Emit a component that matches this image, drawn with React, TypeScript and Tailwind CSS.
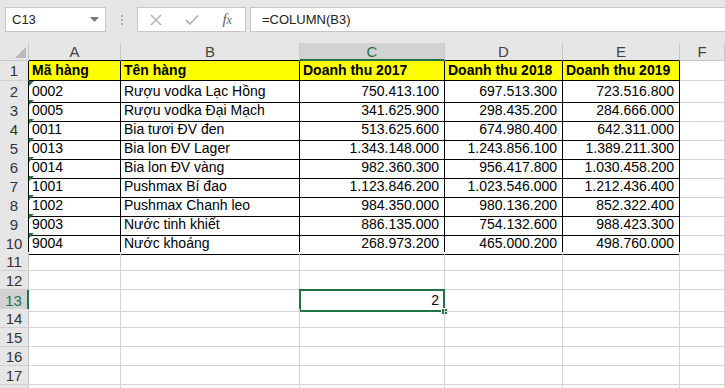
import React from "react";

const cols = ["A", "B", "C", "D", "E", "F"];

const rows: [string, string, string, string, string][] = [
  ["0002", "Rượu vodka Lạc Hồng", "750.413.100", "697.513.300", "723.516.800"],
  ["0005", "Rượu vodka Đại Mạch", "341.625.900", "298.435.200", "284.666.000"],
  ["0011", "Bia tươi ĐV đen", "513.625.600", "674.980.400", "642.311.000"],
  ["0013", "Bia lon ĐV Lager", "1.343.148.000", "1.243.856.100", "1.389.211.300"],
  ["0014", "Bia lon ĐV vàng", "982.360.300", "956.417.800", "1.030.458.200"],
  ["1001", "Pushmax Bí đao", "1.123.846.200", "1.023.546.000", "1.212.436.400"],
  ["1002", "Pushmax Chanh leo", "984.350.000", "980.136.200", "852.322.400"],
  ["9003", "Nước tinh khiết", "886.135.000", "754.132.600", "988.423.300"],
  ["9004", "Nước khoáng", "268.973.200", "465.000.200", "498.760.000"],
];

const gridCols = "grid grid-cols-[29px_92px_179px_145px_118px_117px_1fr]";

function TopBar() {
  return (
    <div className="h-[43px] bg-[#e6e6e6] flex items-start pt-[7px] pl-[5px]">
      <div className="w-[101px] h-[25px] bg-white border border-[#c6c6c6] flex items-center justify-between pl-[6px] pr-[6px]">
        <span className="text-[13px] text-[#222]">C13</span>
        <svg width="9" height="5" viewBox="0 0 9 5">
          <path d="M0 0 L9 0 L4.5 5 Z" fill="#767676" />
        </svg>
      </div>
      <div className="w-[31px] h-[25px] flex flex-col items-center justify-center gap-[2px]">
        <span className="w-[2px] h-[2px] bg-[#b0b0b0]" />
        <span className="w-[2px] h-[2px] bg-[#b0b0b0]" />
        <span className="w-[2px] h-[2px] bg-[#b0b0b0]" />
      </div>
      <div className="w-[109px] h-[25px] bg-white border border-[#c6c6c6] flex items-center">
        <div className="w-[36px] flex justify-center">
          <svg width="12" height="12" viewBox="0 0 12 12">
            <path d="M1 1 L11 11 M11 1 L1 11" stroke="#b4b4b4" strokeWidth="1.6" />
          </svg>
        </div>
        <div className="w-[36px] flex justify-center">
          <svg width="14" height="12" viewBox="0 0 14 12">
            <path d="M1 6 L5 10 L13 1.5" stroke="#b4b4b4" strokeWidth="1.8" fill="none" />
          </svg>
        </div>
        <div className="w-[36px] flex justify-center">
          <span className="font-['Liberation_Serif',serif] italic text-[15px] text-[#606060] leading-none">
            f<span className="text-[12px]">x</span>
          </span>
        </div>
      </div>
      <div className="ml-[4px] flex-1 h-[25px] bg-white border-y border-l border-[#c6c6c6] flex items-center pl-[11px]">
        <span className="text-[13px] text-[#222]">=COLUMN(B3)</span>
      </div>
    </div>
  );
}

function HeaderRow() {
  return (
    <div className={`${gridCols} h-[18px] bg-[#e6e6e6]`}>
      <div className="relative border-r border-b border-[#c6c6c6]">
        <svg className="absolute right-[2px] bottom-[2px]" width="11" height="11" viewBox="0 0 11 11">
          <path d="M11 0 L11 11 L0 11 Z" fill="#b8b8b8" />
        </svg>
      </div>
      {cols.map((c) => {
        const sel = c === "C";
        const inTable = c !== "F";
        return (
          <div
            key={c}
            className={`flex items-center justify-center text-[15px] leading-none border-r border-[#c6c6c6] ${
              sel
                ? "bg-[#d2d2d2] text-[#217346] border-b-2 border-b-[#217346]"
                : inTable
                ? "text-[#444] border-b border-b-black"
                : "text-[#444] border-b border-b-[#c6c6c6]"
            }`}
          >
            {c}
          </div>
        );
      })}
    </div>
  );
}

function RowHeader({ n, table, label = true }: { n: number; table: boolean; label?: boolean }) {
  const sel = n === 13;
  return (
    <div
      className={`flex items-center justify-center text-[15px] leading-none border-b border-[#d0d0d0] ${
        sel
          ? "bg-[#d2d2d2] text-[#217346] border-r-2 border-r-[#217346]"
          : table
          ? "bg-[#e6e6e6] text-[#333] border-r border-r-black"
          : "bg-[#e6e6e6] text-[#333] border-r border-r-[#c6c6c6]"
      }`}
    >
      {label ? n : null}
    </div>
  );
}

function Marker() {
  return (
    <span className="absolute left-0 top-0 w-0 h-0 border-t-[5px] border-r-[5px] border-t-[#217346] border-r-transparent" />
  );
}

export default function App() {
  const emptyRows = [11, 12, 13, 14, 15, 16, 17, 18];
  return (
    <div className="w-[725px] h-[388px] overflow-hidden bg-white font-['Liberation_Sans',Arial,sans-serif]">
      <TopBar />
      <HeaderRow />

      {/* row 1: yellow header */}
      <div className={`${gridCols} h-[20px]`}>
        <RowHeader n={1} table />
        {["Mã hàng", "Tên hàng", "Doanh thu 2017", "Doanh thu 2018", "Doanh thu 2019"].map((t) => (
          <div
            key={t}
            className="bg-[#ffff00] border-r border-b border-black flex items-center pl-[3px] text-[14px] font-bold text-black whitespace-nowrap overflow-hidden"
          >
            {t}
          </div>
        ))}
        <div className="border-r border-b border-[#d4d4d4]" />
      </div>

      {rows.map((r, i) => (
        <div key={i} className={`${gridCols} h-[19px]`}>
          <RowHeader n={i + 2} table />
          <div className="relative border-r border-b border-black flex items-center pl-[3px] text-[14px] text-black">
            <Marker />
            {r[0]}
          </div>
          <div className="border-r border-b border-black flex items-center pl-[3px] text-[14px] text-black whitespace-nowrap">
            {r[1]}
          </div>
          {[r[2], r[3], r[4]].map((v, j) => (
            <div
              key={j}
              className="border-r border-b border-black flex items-center justify-end pr-[5px] text-[14px] text-black"
            >
              {v}
            </div>
          ))}
          <div className="border-r border-b border-[#d4d4d4]" />
        </div>
      ))}

      {emptyRows.map((n) => (
        <div key={n} className={`${gridCols} h-[19px]`}>
          <RowHeader n={n} table={false} label={n !== 18} />
          {cols.map((c) => (
            <div key={c} className="relative border-r border-b border-[#d4d4d4] flex items-center justify-end pr-[5px] text-[14px] text-black">
              {n === 13 && c === "C" && (
                <>
                  2
                  <span className="absolute left-[-1px] top-[-1px] right-[-1px] bottom-[-1px] border-2 border-[#217346]" />
                  <span className="absolute right-[-4px] bottom-[-4px] w-[7px] h-[7px] bg-[#217346] border border-white" />
                </>
              )}
            </div>
          ))}
        </div>
      ))}
    </div>
  );
}
